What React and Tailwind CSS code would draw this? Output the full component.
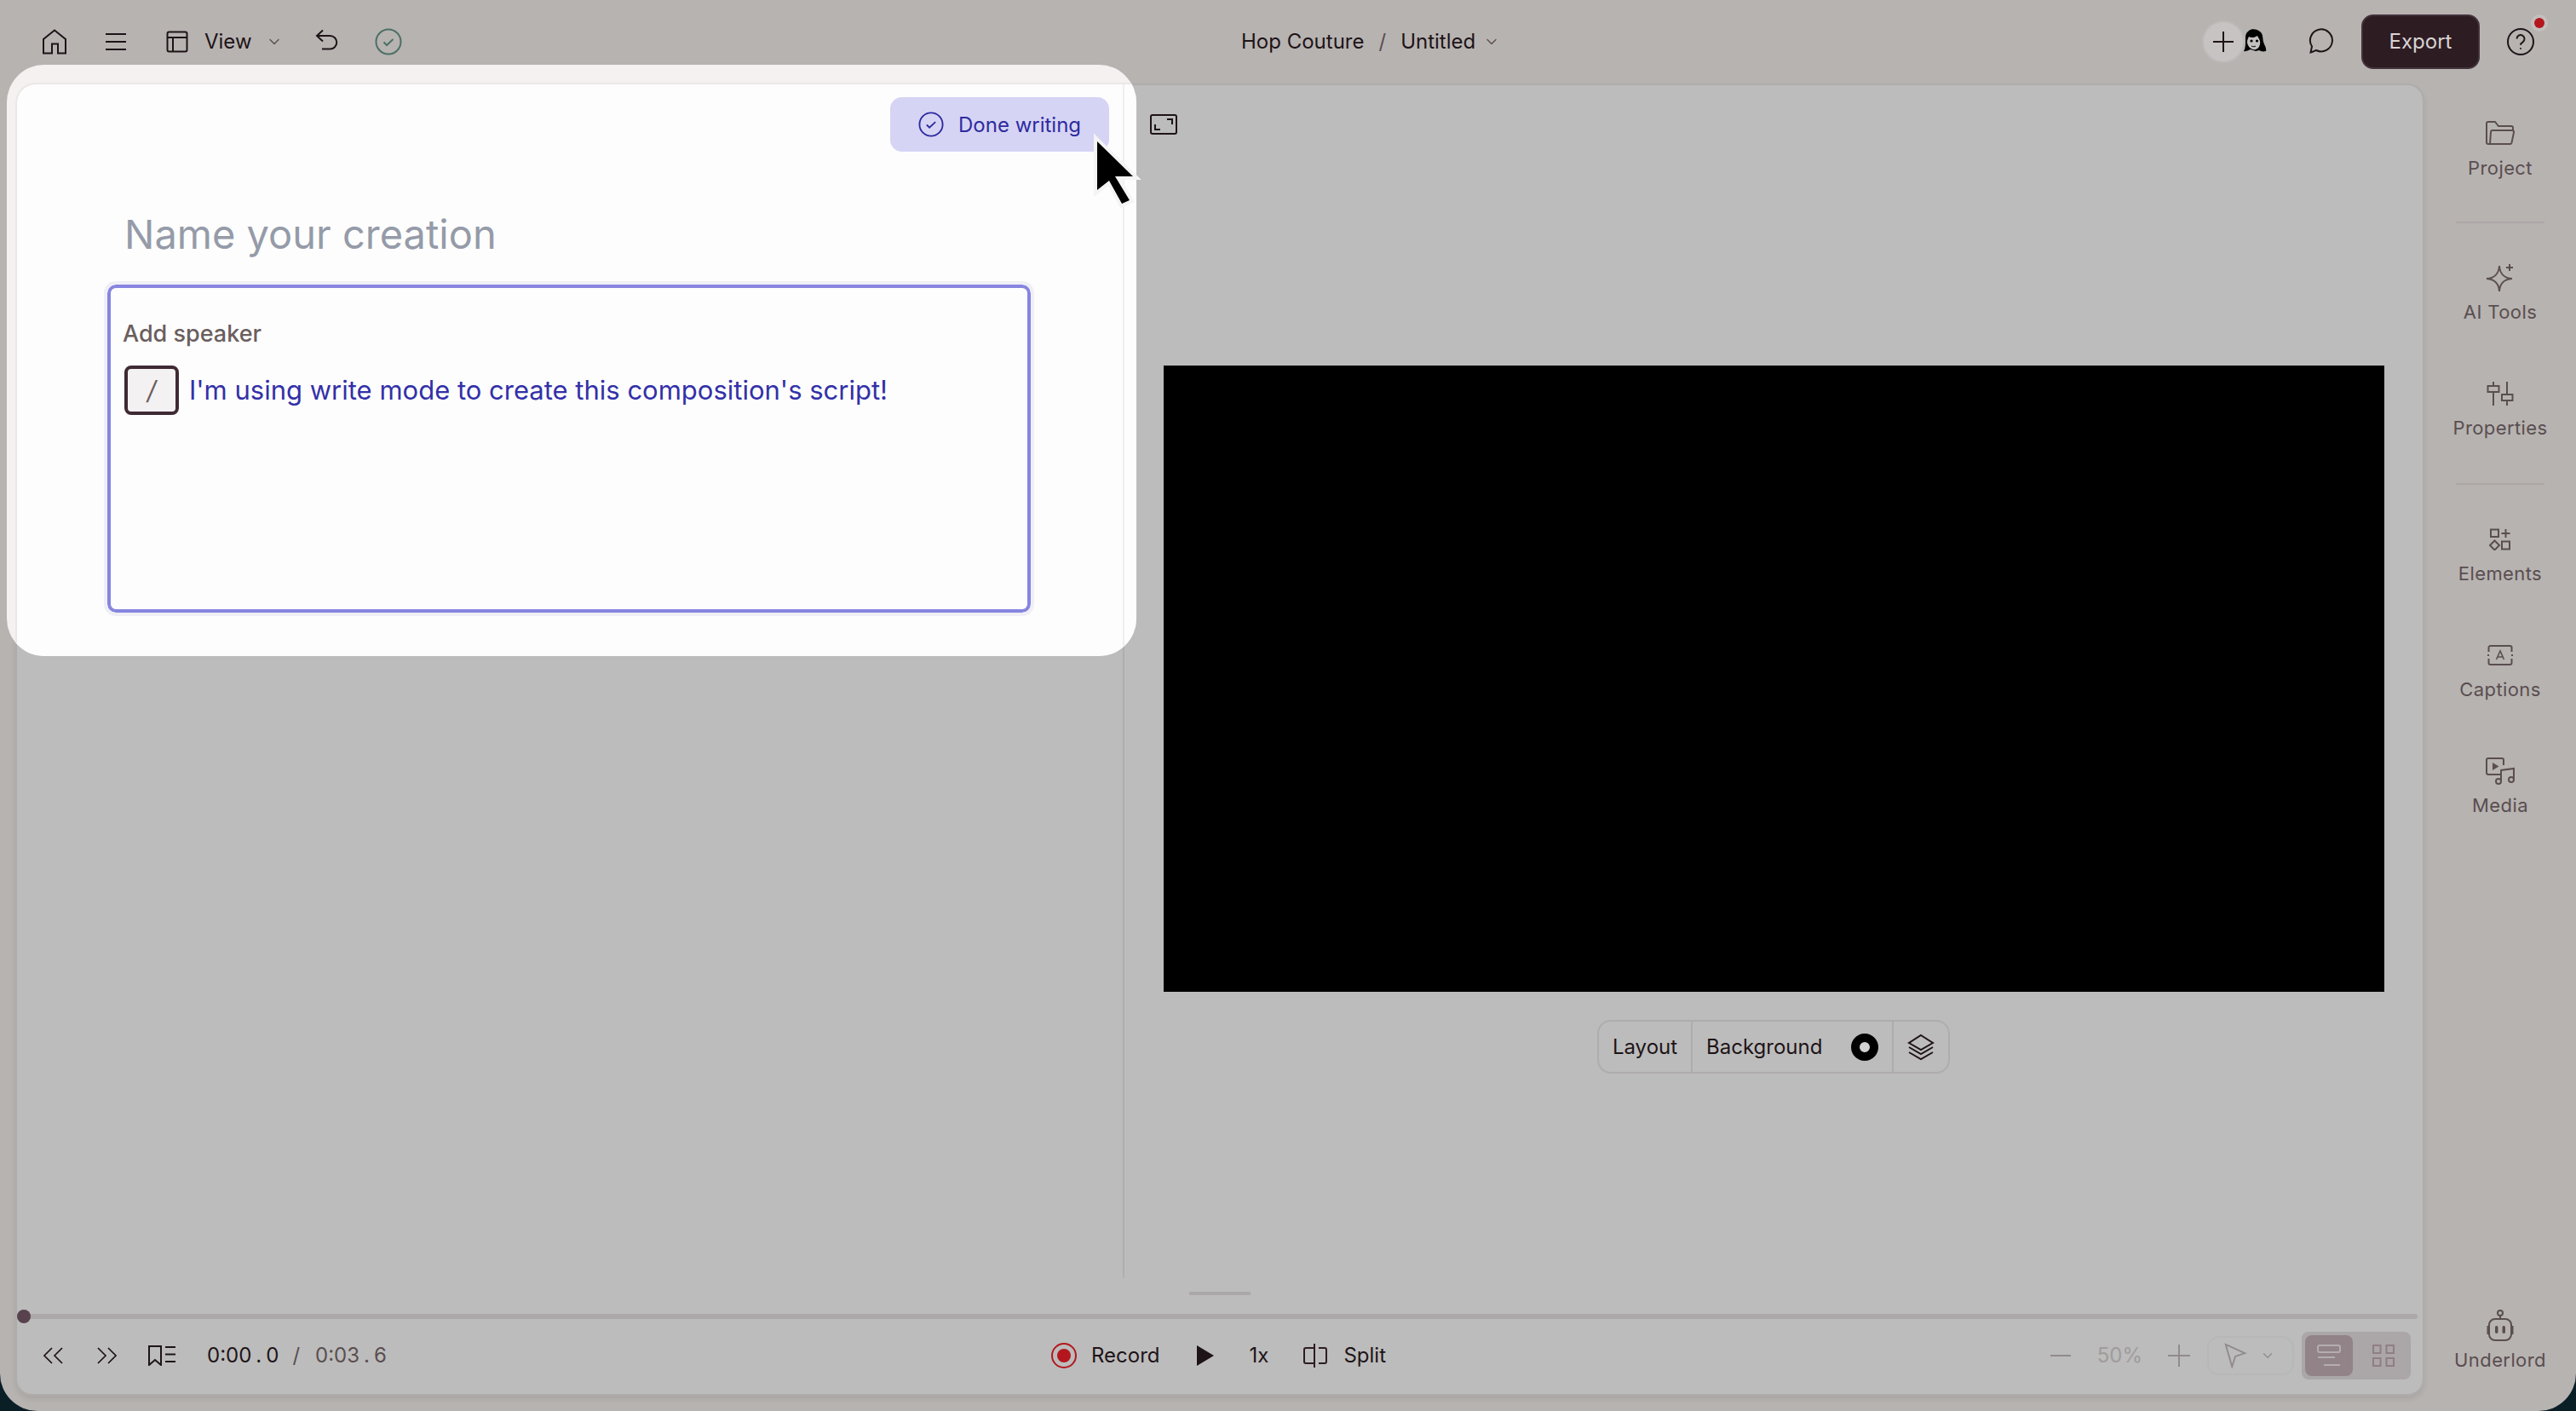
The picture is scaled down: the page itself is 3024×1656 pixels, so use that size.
import React from 'react'
import { ChevronDown } from 'lucide-react'

const font = "font-['Inter','Liberation_Sans',sans-serif]"

function Svg({ className, size = 32, children, sw = 2, vb = 32 }) {
  return (
    <svg width={size} height={size} viewBox={`0 0 ${vb} ${vb}`} fill="none" stroke="currentColor" strokeWidth={sw} className={className}>
      {children}
    </svg>
  )
}

function SideItem({ label, children, tall = true }) {
  return (
    <button className={`w-full flex flex-col items-center pt-[32px] text-[#5a4e50] ${tall ? 'h-[136px]' : 'h-[130px]'}`}>
      <span className="h-[32px] flex items-center justify-center">{children}</span>
      <span className="mt-[10px] text-[22px] leading-[28px] tracking-[0.4px]">{label}</span>
    </button>
  )
}

function CheckCircle({ className, size = 32 }) {
  return (
    <Svg size={size} className={className}>
      <circle cx="16" cy="16" r="14.5" />
      <path d="M10.5 16.5 14 20l7.5-7" />
    </Svg>
  )
}

function Avatar() {
  return (
    <svg width="28" height="30" viewBox="0 0 28 30" className="-ml-[2px]">
      <path d="M7 2c3-3 10-2 13 1 4 3 3 8 4 12 1 4 4 7 3 11-4 1-6 0-8-1l-4 1-6-2c-3 1-6 3-8 2 2-3 2-8 2-13S3 5 7 2Z" fill="#000" />
      <path d="M7 9c3 2 7 1 10-1 2 4 4 6 3 10-1 5-5 7-8 6-4-1-7-5-7-9 0-2 1-4 2-6Z" fill="#c4c0bf" />
      <circle cx="10" cy="14" r="1.6" fill="#000" />
      <circle cx="16.5" cy="14" r="1.6" fill="#000" />
      <path d="M10 20c2 1 4 1 5 0" stroke="#000" strokeWidth="1" fill="none" />
    </svg>
  )
}

function TopBar() {
  return (
    <header className="h-[98px] shrink-0 relative flex items-center justify-between pl-[49px] pr-[49px] text-[#1e1418]">
      <div className="flex items-center">
        <svg width="30" height="30" viewBox="0 0 30 30" fill="none" stroke="currentColor" strokeWidth="2">
          <path d="M2 28.500V12L15 1.500 28 12v16.500h-9V17.500h-7v11Z" />
        </svg>
        <svg width="26" height="22" viewBox="0 0 26 22" fill="none" stroke="currentColor" strokeWidth="2" className="ml-[44px]">
          <path d="M1 2h24M1 11h24M1 20h24" />
        </svg>
        <svg width="26" height="26" viewBox="0 0 26 26" fill="none" stroke="currentColor" strokeWidth="2" className="ml-[46px]">
          <rect x="1.500" y="1.500" width="23" height="23" rx="2" />
          <path d="M1.500 8h23M8 8v16.500" />
        </svg>
        <span className="ml-[19px] text-[24px] leading-none">View</span>
        <ChevronDown size={20} strokeWidth={1.6} className="ml-[16px] text-[#5a4e50]" />
        <svg width="28" height="28" viewBox="0 0 28 28" fill="none" stroke="currentColor" strokeWidth="2" className="ml-[38px] -mt-[2px]">
          <path d="M9 1.500 2 8l7 6.500M2 8h15.500a7.500 7.500 0 0 1 0 15.500H8" />
        </svg>
        <CheckCircle size={32} className="ml-[42px] text-[#4b7066]" />
      </div>

      <div className="absolute left-[1457px] top-0 h-full flex items-center text-[24px]">
        <span>Hop Couture</span>
        <span className="ml-[17px] text-[#5a4e50]">/</span>
        <span className="ml-[17px]">Untitled</span>
        <ChevronDown size={20} strokeWidth={1.6} className="ml-[9px] text-[#5a4e50]" />
      </div>

      <div className="flex items-center">
        <div className="w-[50px] h-[50px] rounded-full bg-[#c6c3c2] border-2 border-[#bdb9b8] flex items-center justify-center relative z-10">
          <Svg size={26} vb={26}><path d="M13 1v24M1 13h24" /></Svg>
        </div>
        <Avatar />
        <Svg size={32} className="ml-[46px]"><path d="M5.500 28.500 7 21.500A13 13 0 1 1 12 26c-2 .5-4 2-6.500 2.500Z" /></Svg>
        <button className="ml-[33px] w-[139px] h-[64px] rounded-[14px] bg-[#2e1c23] border-2 border-[#41323a] text-[#d8d4d3] text-[24px]">Export</button>
        <div className="ml-[32px] relative">
          <svg width="32" height="32" viewBox="0 0 32 32" fill="none" stroke="currentColor" strokeWidth="2">
            <circle cx="16" cy="16" r="15" />
            <path d="M11.500 12.500a4.500 4.500 0 1 1 7 3.800c-1.500 1-2.500 1.700-2.500 3.400" />
            <circle cx="16" cy="24" r="1" fill="currentColor" stroke="none" />
          </svg>
          <span className="absolute -top-[16px] -right-[16px] w-[20px] h-[20px] rounded-full bg-[#c4bfbe] flex items-center justify-center">
            <span className="w-[12px] h-[12px] rounded-full bg-[#b3171d]"></span>
          </span>
        </div>
      </div>
    </header>
  )
}

function Sidebar() {
  return (
    <aside className="w-[178px] shrink-0 flex flex-col items-center pt-[11px]">
      <SideItem label="Project">
        <svg width="34" height="30" viewBox="0 0 34 30" fill="none" stroke="currentColor" strokeWidth="2">
          <path d="M5 27H3a2 2 0 0 1-2-2V3a2 2 0 0 1 2-2h8l4 5h15a2 2 0 0 1 2 2v3" />
          <path d="M8 11h23a2 2 0 0 1 2 2.500l-2.500 12A2 2 0 0 1 28.500 27H5l1-14a2 2 0 0 1 2-2Z" />
        </svg>
      </SideItem>
      <div className="w-[104px] h-[2px] bg-[#aca7a6] mt-[15px] mb-[16px]"></div>
      <SideItem label="AI Tools">
        <svg width="34" height="34" viewBox="0 0 34 34" fill="none" stroke="currentColor" strokeWidth="2">
          <path d="M16 3C16.500 12 22 17.500 31 18 22 18.500 16.500 24 16 33 15.500 24 10 18.500 1 18 10 17.500 15.500 12 16 3Z" />
          <path d="M28 1v8M24 5h8" />
        </svg>
      </SideItem>
      <SideItem label="Properties">
        <svg width="32" height="30" viewBox="0 0 32 30" fill="none" stroke="currentColor" strokeWidth="2">
          <path d="M8 1v5M8 14v15M24 1v15M24 24v5" />
          <rect x="1.500" y="6" width="13" height="7" />
          <rect x="18" y="16" width="12.500" height="7" />
        </svg>
      </SideItem>
      <div className="w-[104px] h-[2px] bg-[#aca7a6] mt-[17px] mb-[16px]"></div>
      <SideItem label="Elements">
        <svg width="26" height="26" viewBox="0 0 26 26" fill="none" stroke="currentColor" strokeWidth="2">
          <rect x="2" y="1.500" width="9" height="8.500" />
          <path d="M19.500 1v10M14.500 6h10" />
          <path d="M6.500 14.500 12 20l-5.500 5.500L1 20Z" />
          <rect x="15" y="15.500" width="9" height="9" />
        </svg>
      </SideItem>
      <SideItem label="Captions">
        <svg width="30" height="24" viewBox="0 0 30 24" fill="none" stroke="currentColor" strokeWidth="2">
          <path d="M1.500 8V3a2 2 0 0 1 2-2h23a2 2 0 0 1 2 2v5M1.500 16v5a2 2 0 0 0 2 2h23a2 2 0 0 0 2-2v-5M1 11v2M29 11v2" />
          <path d="m10.500 17 4.500-10 4.500 10M12 14h6" strokeWidth="1.600" />
        </svg>
      </SideItem>
      <SideItem label="Media">
        <svg width="34" height="32" viewBox="0 0 34 32" fill="none" stroke="currentColor" strokeWidth="2">
          <path d="M19 20H3a2 2 0 0 1-2-2V3a2 2 0 0 1 2-2h16a2 2 0 0 1 2 2v6" />
          <path d="M8 6v9l7.500-4.500Z" fill="currentColor" stroke="none" />
          <path d="M18 28V15l15-2v13" />
          <circle cx="15" cy="28" r="3" />
          <circle cx="30" cy="26" r="3" />
        </svg>
      </SideItem>
      <div className="mt-auto w-full">
        <SideItem label="Underlord" tall={false}>
          <svg width="32" height="38" viewBox="0 0 32 38" fill="none" stroke="currentColor" strokeWidth="2">
            <circle cx="16" cy="4" r="3" />
            <path d="M16 7v4" />
            <rect x="3" y="11" width="26" height="25" rx="7" />
            <path d="M3 20H1.500v8H3M29 20h1.500v8H29" />
            <rect x="10" y="19" width="3.500" height="9" rx="1.700" fill="currentColor" stroke="none" />
            <rect x="18.500" y="19" width="3.500" height="9" rx="1.700" fill="currentColor" stroke="none" />
          </svg>
        </SideItem>
      </div>
    </aside>
  )
}

function BottomControls() {
  return (
    <div className="h-[88px] shrink-0 relative flex items-center justify-between pl-[31px] pr-[14px] pb-[2px] text-[24px] text-[#1e1418]">
      <div className="flex items-center">
        <Svg size={24} vb={24} sw={1.700}><path d="M10 3 1 12l9 9M22 3l-9 9 9 9" /></Svg>
        <Svg size={24} vb={24} sw={1.700} className="ml-[38px]"><path d="m2 3 9 9-9 9M14 3l9 9-9 9" /></Svg>
        <svg width="32" height="24" viewBox="0 0 32 24" fill="none" stroke="currentColor" strokeWidth="2" className="ml-[37px]">
          <path d="M1 1h14v22l-7-6-7 6ZM20 2h12M20 10.500h12M20 19h12" />
        </svg>
        <span className="ml-[37px]">0:00<span className="mx-[5px]">.</span>0</span>
        <span className="ml-[16px] text-[#5a4e50]">/</span>
        <span className="ml-[18px] text-[#5a4e50]">0:03<span className="mx-[5px]">.</span>6</span>
      </div>

      <div className="absolute left-[1214px] top-0 bottom-[2px] flex items-center">
        <span className="w-[30px] h-[30px] rounded-full border-2 border-[#b3171d] flex items-center justify-center">
          <span className="w-[16px] h-[16px] rounded-full bg-[#b3171d]"></span>
        </span>
        <span className="ml-[17px]">Record</span>
        <svg width="20" height="24" viewBox="0 0 20 24" className="ml-[43px]"><path d="M0 0v24l20-12Z" fill="currentColor" /></svg>
        <span className="ml-[42px]">1x</span>
        <svg width="28" height="28" viewBox="0 0 28 28" fill="none" stroke="#2e1c23" strokeWidth="2" className="ml-[41px]">
          <path d="M12 5H3a2 2 0 0 0-2 2v14a2 2 0 0 0 2 2h9M18 5h7a2 2 0 0 1 2 2v14a2 2 0 0 1-2 2h-7M13 0v28" />
        </svg>
        <span className="ml-[19px]">Split</span>
      </div>

      <div className="flex items-center">
        <span className="w-[24px] h-[2px] bg-[#918b8c]"></span>
        <span className="ml-[31px] text-[#a09b9c]">50%</span>
        <Svg size={26} vb={26} className="ml-[30px] text-[#918b8c]"><path d="M13 0v26M0 13h26" /></Svg>
        <div className="ml-[20px] w-[102px] h-[46px] rounded-[14px] border-2 border-[#b8b7b7] flex items-center pl-[16px] text-[#918b8c]">
          <Svg size={30}><path d="M4 2 28 13 16 17 12 30Z" /></Svg>
          <ChevronDown size={18} strokeWidth={1.800} className="ml-[14px]" />
        </div>
        <div className="ml-[9px] w-[128px] h-[56px] rounded-[8px] bg-[#aba6a7] p-[4px] flex">
          <span className="w-[56px] h-[48px] rounded-[8px] bg-[#918387] flex items-center justify-center">
            <svg width="28" height="26" viewBox="0 0 28 26" fill="none" stroke="#b5adb0" strokeWidth="2">
              <rect x="1" y="1" width="26" height="8" rx="2" />
              <path d="M1 15h20M8 24h19" />
            </svg>
          </span>
          <span className="flex-1 flex items-center justify-center pl-[8px]">
            <svg width="26" height="26" viewBox="0 0 26 26" fill="none" stroke="#8f7f85" strokeWidth="2">
              <rect x="1" y="1" width="8.500" height="9" />
              <rect x="16.500" y="1" width="8.500" height="9" />
              <rect x="1" y="16" width="8.500" height="9" />
              <rect x="16.500" y="16" width="8.500" height="9" />
            </svg>
          </span>
        </div>
      </div>
    </div>
  )
}

function Main() {
  return (
    <main className="w-[2828px] shrink-0 rounded-[20px] bg-[#bcbcbc] border-2 border-[#b0acab] shadow-[0_4px_6px_rgba(0,0,0,0.08)] flex flex-col overflow-hidden">
      <div className="flex-1 flex min-h-0">
        <div className="w-[1300px] shrink-0 border-r-2 border-[#b1aeae] mb-[16px]"></div>
        <div className="flex-1 flex flex-col items-center relative">
          <div className="self-start ml-[30px] mt-[34px]">
            <svg width="32" height="24" viewBox="0 0 32 24" fill="none" stroke="#1e1418" strokeWidth="2">
              <rect x="1" y="1" width="30" height="22" rx="2" />
              <path d="M20 6h6v6M12 18H6v-6" />
            </svg>
          </div>
          <div className="w-[1433px] h-[735px] bg-black mt-[271px]"></div>
          <div className="mt-[33px] h-[63px] flex rounded-[16px] border-2 border-[#aeacac] text-[24px] text-[#1e1418]">
            <span className="w-[110px] flex items-center justify-center border-r-2 border-[#aeacac]">Layout</span>
            <span className="w-[236px] flex items-center pl-[16px] border-r-2 border-[#aeacac]">
              Background
              <span className="ml-[34px] w-[32px] h-[32px] rounded-full border-[10px] border-black bg-[#d2d2d2]"></span>
            </span>
            <span className="w-[64px] flex items-center justify-center">
              <svg width="32" height="32" viewBox="0 0 32 32" fill="none" stroke="#1e1418" strokeWidth="2">
                <path d="M16 2 30 11l-14 8-14-8Z" />
                <path d="M2 16l14 8 14-8M2 22l14 8 14-8" />
              </svg>
            </span>
          </div>
        </div>
      </div>
      <div className="h-[26px] shrink-0 flex justify-center items-start">
        <span className="w-[72px] h-[4px] bg-[#aca7a8]"></span>
      </div>
      <div className="shrink-0 pr-[6px] relative">
        <div className="h-[6px] rounded-r-full bg-[#aca7a8]"></div>
        <span className="absolute left-0 -top-[5px] w-[16px] h-[16px] rounded-full bg-[#57424d]"></span>
      </div>
      <BottomControls />
    </main>
  )
}

function WriteDialog() {
  return (
    <div className="absolute left-[8px] top-[76px] w-[1326px] h-[694px] rounded-[44px] bg-[#f5f1f0] pt-[21px] pl-[10px] overflow-hidden">
      <div className="h-full rounded-tl-[24px] bg-[#fdfdfd] border-t-2 border-l-2 border-[#ebe7e6] pl-[106px] relative">
        <div className="absolute right-0 top-0 h-full w-[16px] border-l-2 border-[#efefef]"></div>
        <button className="absolute left-[1025px] top-[15px] w-[257px] h-[64px] rounded-[14px] bg-[#d6d4f4] text-[#2e2ba0] text-[24px] flex items-center pl-[33px]">
          <CheckCircle size={30} />
          <span className="ml-[17px] mt-[1px]">Done writing</span>
        </button>
        <h1 className="pt-[148px] text-[47px] leading-[56px] text-[#959ba8] font-normal pl-[20px]">Name your creation</h1>
        <div className="mt-[31px] w-[1084px] h-[385px] rounded-[10px] border-[4px] border-[#8785e0] outline-[4px] outline-[#f0eff6] pl-[14px]">
          <div className="pt-[36px] text-[27px] leading-[36px] font-medium text-[#6b5e5e]">Add speaker</div>
          <div className="mt-[19px] ml-[2px] flex items-center">
            <kbd className={`w-[64px] h-[58px] rounded-[8px] border-[4px] border-[#3f2a33] bg-[#f4f1f2] flex items-center justify-center text-[30px] italic font-normal text-[#6b5e5e] ${font}`}>/</kbd>
            <span className="ml-[12px] text-[31px] leading-[40px] text-[#3330a8]">I'm using write mode to create this composition's script!</span>
          </div>
        </div>
      </div>
    </div>
  )
}

function Cursor() {
  return (
    <svg width="70" height="100" viewBox="0 0 70 100" className="absolute left-[1280px] top-[150px]">
      <path d="M8 16 50 57H29L46 85 37 89 22 62 8 73Z" fill="#000" stroke="#f4f4f4" strokeWidth="8" paintOrder="stroke" />
    </svg>
  )
}

export default function App() {
  return (
    <div className={`relative w-[3024px] h-[1656px] overflow-hidden bg-[#0a1e26] ${font}`}>
      <div className="h-full rounded-b-[44px] bg-[#b7b3b1] flex flex-col pb-[18px]">
        <TopBar />
        <div className="flex-1 flex pl-[18px] min-h-0">
          <Main />
          <Sidebar />
        </div>
      </div>
      <WriteDialog />
      <Cursor />
    </div>
  )
}
